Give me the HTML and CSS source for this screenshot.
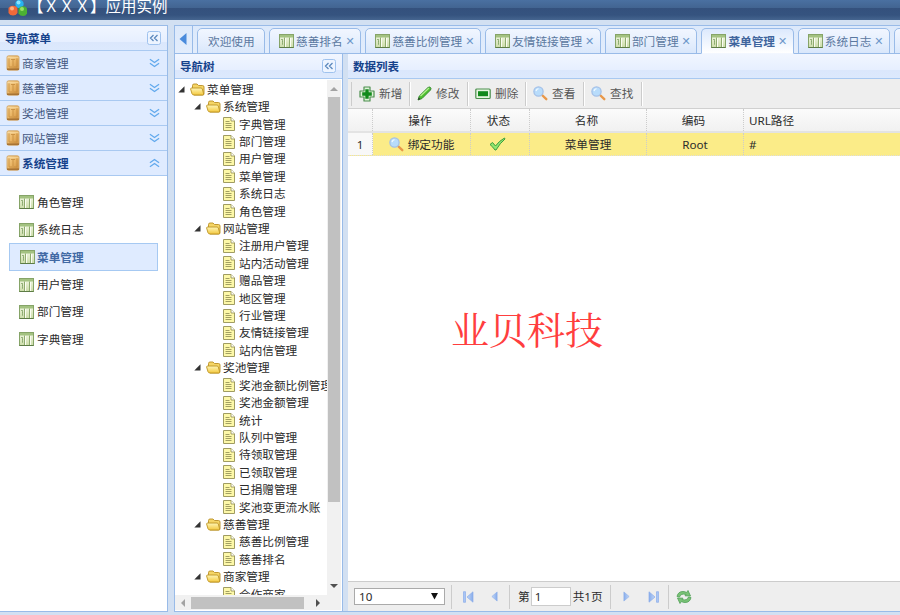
FILE: index.html
```html
<!DOCTYPE html>
<html lang="zh-CN">
<head>
    <meta charset="UTF-8">
    <title>应用实例</title>
    <link rel="stylesheet" href="styles.css">
</head>
<body>

    <!-- Shared icons -->
    <svg class="defs" width="0" height="0">
        <defs>
            <linearGradient id="gold" x1="0" x2="1" y1="0" y2="1"><stop offset="0" stop-color="#f8d596"/><stop offset=".5" stop-color="#eab564"/><stop offset="1" stop-color="#c98a3c"/></linearGradient>
            <linearGradient id="folderFill" x1="0" x2="0" y1="0" y2="1"><stop offset="0" stop-color="#fff6b8"/><stop offset="1" stop-color="#f3c83e"/></linearGradient>
            <linearGradient id="arrowFill" x1="0" x2="1"><stop offset="0" stop-color="#c4d8f8"/><stop offset="1" stop-color="#86abea"/></linearGradient>
            <linearGradient id="paneFill" x1="0" x2="0" y1="0" y2="1"><stop offset="0" stop-color="#f3f8e6"/><stop offset="1" stop-color="#cbdca8"/></linearGradient>
        </defs>
        <symbol id="box" viewBox="0 0 14 16">
            <rect x="1" y=".8" width="12" height="14.400" rx="1.500" fill="url(#gold)" stroke="#cfa468" stroke-width=".9"/>
            <path d="M1.500 2.800h11" stroke="#fae0ae" stroke-width=".8"/>
            <path d="M1 14.200h12" stroke="#a87434" stroke-width="1.600"/>
            <path d="M3 3.300v8.500M11 3.300v8.500M5 4.500h4M7 4.500v6.500M3 12h8" stroke="#c48a3c" stroke-width=".8" fill="none"/>
        </symbol>
        <symbol id="grid" viewBox="0 0 15 14">
            <rect x=".5" y=".5" width="14" height="13" fill="url(#paneFill)" stroke="#86a468"/>
            <path d="M1 1h13v2.500H1z" fill="#a3c281"/>
            <path d="M5.500 3.500V13M10.500 3.500V13" stroke="#8fab6e"/>
            <path d="M6 4h1v9H6zM11 4h1v9h-1z" fill="#fbfdf4"/>
            <path d="M2 5.500h1M3.500 5v5.500M3 7.500h1M3 10h1" stroke="#83a568" stroke-width=".8"/>
            <path d="M.5 13.500h14" stroke="#5d7c46"/>
        </symbol>
        <symbol id="folder" viewBox="0 0 15 13">
            <path d="M2.500 5V2.500Q2.500 1 4 1h3l1.500 1.500h4Q14 2.500 14 4v6.500Q14 12 12.500 12H4Z" fill="#f5d566" stroke="#b98f25" stroke-width=".9"/>
            <path d="M.6 6Q.6 5 1.600 5H11q1 0 1.300 1l1.400 5q.2 1-1 1H4Q2.500 12 2 10.800Z" fill="url(#folderFill)" stroke="#bd9425" stroke-width=".9"/>
        </symbol>
        <symbol id="page" viewBox="0 0 12 14">
            <path d="M.5.5h7.500l3.500 3.500v9.500H.5Z" fill="#fdf8a8" stroke="#a09c62"/>
            <path d="M8 .5V4h3.500" fill="#fff" stroke="#8f8b4a" stroke-width=".8"/>
            <path d="M2.500 4.500H6.500M2.500 6.500h6M2.500 8.500h6M2.500 10.500h6" stroke="#99955a" stroke-width=".9"/>
        </symbol>
        <symbol id="open" viewBox="0 0 7 7"><path d="M6.500.3V6.500H.3Z" fill="#333"/></symbol>
        <symbol id="down" viewBox="0 0 12 10"><path d="M1 .8l5 3.600L11 .8M1 5.200l5 3.600 5-3.600" fill="none" stroke="#62a9ed" stroke-width="1.400"/></symbol>
        <symbol id="left" viewBox="0 0 14 14">
            <rect x=".5" y=".5" width="13" height="13" rx="2" fill="#edf4ff" stroke="#9fc2ee"/>
            <path d="M6.500 4l-3 3 3 3M10.500 4l-3 3 3 3" fill="none" stroke="#5c88bd" stroke-width="1.300"/>
        </symbol>
        <symbol id="lens" viewBox="0 0 15 15">
            <path d="M9.500 9.500l3.800 3.700" stroke="#e8984a" stroke-width="2.400" stroke-linecap="round"/>
            <circle cx="5.500" cy="5.500" r="4.600" fill="#b8dcfb" stroke="#a3c0e8" stroke-width="1.300"/>
            <path d="M3 5q.5-2 2.500-2.300" stroke="#f2faff" stroke-width="1.300" fill="none"/>
        </symbol>
        <symbol id="prev" viewBox="0 0 8 12"><path d="M7 .8v10.400L1 6Z" fill="url(#arrowFill)" stroke="#8caeea" stroke-width=".7"/></symbol>
        <symbol id="first" viewBox="0 0 11 12"><path d="M.5.700h2v10.600h-2Z" fill="#a9c5f5" stroke="#8caeea" stroke-width=".7"/><path d="M10 .8v10.400L4 6Z" fill="url(#arrowFill)" stroke="#8caeea" stroke-width=".7"/></symbol>
    </svg>

    <!-- Title bar -->
    <header class="banner">
        <svg class="logo" width="20" height="18" viewBox="0 0 20 18">
            <circle cx="11.500" cy="4" r="4.200" fill="#27b3f0"/><circle cx="10.500" cy="2.500" r="2" fill="#8be4ff"/>
            <path d="M.5 8Q2 5.800 5 5.800T9.500 8v5Q8 15.500 5 15.500T.5 13Z" fill="#f0693a"/><circle cx="4" cy="8.500" r="2" fill="#ffae80"/>
            <path d="M10.500 8.500Q12 6.300 15 6.300t4 2.200v5Q18 16 15 16t-4.500-2.500Z" fill="#4bb133"/><circle cx="14" cy="9" r="2" fill="#99e165"/>
        </svg>
        <span>【ＸＸＸ】应用实例</span>
    </header>

    <div class="layout">
        <!-- Left menu -->
        <aside class="menu">
            <div class="menu-title"><b>导航菜单</b><svg width="14" height="14"><use href="#left"/></svg></div>
            <div class="fold"><svg width="14" height="16"><use href="#box"/></svg><span>商家管理</span><svg class="arrows" width="11" height="10"><use href="#down"/></svg></div>
            <div class="fold"><svg width="14" height="16"><use href="#box"/></svg><span>慈善管理</span><svg class="arrows" width="11" height="10"><use href="#down"/></svg></div>
            <div class="fold"><svg width="14" height="16"><use href="#box"/></svg><span>奖池管理</span><svg class="arrows" width="11" height="10"><use href="#down"/></svg></div>
            <div class="fold"><svg width="14" height="16"><use href="#box"/></svg><span>网站管理</span><svg class="arrows" width="11" height="10"><use href="#down"/></svg></div>
            <div class="fold open"><svg width="14" height="16"><use href="#box"/></svg><span>系统管理</span><svg class="arrows" width="11" height="10"><use href="#down"/></svg></div>
            <div class="links">
                <div class="link"><svg width="15" height="14"><use href="#grid"/></svg>角色管理</div>
                <div class="link"><svg width="15" height="14"><use href="#grid"/></svg>系统日志</div>
                <div class="link selected"><svg width="15" height="14"><use href="#grid"/></svg>菜单管理</div>
                <div class="link"><svg width="15" height="14"><use href="#grid"/></svg>用户管理</div>
                <div class="link"><svg width="15" height="14"><use href="#grid"/></svg>部门管理</div>
                <div class="link"><svg width="15" height="14"><use href="#grid"/></svg>字典管理</div>
            </div>
        </aside>

        <main class="center">
            <!-- Tabs -->
            <div class="tabs">
                <div class="tab-scroll"><svg width="8" height="12" viewBox="0 0 8 12"><path d="M7.500 0v12L.5 6Z" fill="#4a8bdc"/></svg></div>
                <div class="tab plain">欢迎使用</div>
                <div class="tab"><svg width="15" height="14"><use href="#grid"/></svg>慈善排名<i>✕</i></div>
                <div class="tab wide"><svg width="15" height="14"><use href="#grid"/></svg>慈善比例管理<i>✕</i></div>
                <div class="tab wide"><svg width="15" height="14"><use href="#grid"/></svg>友情链接管理<i>✕</i></div>
                <div class="tab"><svg width="15" height="14"><use href="#grid"/></svg>部门管理<i>✕</i></div>
                <div class="tab active"><svg width="15" height="14"><use href="#grid"/></svg>菜单管理<i>✕</i></div>
                <div class="tab"><svg width="15" height="14"><use href="#grid"/></svg>系统日志<i>✕</i></div>
                <div class="tab"></div>
            </div>

            <div class="panels">
                <!-- Navigation tree -->
                <section class="tree-panel">
                    <div class="panel-title"><b>导航树</b><svg width="14" height="14"><use href="#left"/></svg></div>
                    <div class="tree-view">
                        <div class="tree">
                            <div class="node root"><svg width="7" height="7"><use href="#open"/></svg><svg width="15" height="13"><use href="#folder"/></svg>菜单管理</div>
                            <div class="node"><svg width="7" height="7"><use href="#open"/></svg><svg width="15" height="13"><use href="#folder"/></svg>系统管理</div>
                            <div class="leaf"><svg width="12" height="14"><use href="#page"/></svg>字典管理</div>
                            <div class="leaf"><svg width="12" height="14"><use href="#page"/></svg>部门管理</div>
                            <div class="leaf"><svg width="12" height="14"><use href="#page"/></svg>用户管理</div>
                            <div class="leaf"><svg width="12" height="14"><use href="#page"/></svg>菜单管理</div>
                            <div class="leaf"><svg width="12" height="14"><use href="#page"/></svg>系统日志</div>
                            <div class="leaf"><svg width="12" height="14"><use href="#page"/></svg>角色管理</div>
                            <div class="node"><svg width="7" height="7"><use href="#open"/></svg><svg width="15" height="13"><use href="#folder"/></svg>网站管理</div>
                            <div class="leaf"><svg width="12" height="14"><use href="#page"/></svg>注册用户管理</div>
                            <div class="leaf"><svg width="12" height="14"><use href="#page"/></svg>站内活动管理</div>
                            <div class="leaf"><svg width="12" height="14"><use href="#page"/></svg>赠品管理</div>
                            <div class="leaf"><svg width="12" height="14"><use href="#page"/></svg>地区管理</div>
                            <div class="leaf"><svg width="12" height="14"><use href="#page"/></svg>行业管理</div>
                            <div class="leaf"><svg width="12" height="14"><use href="#page"/></svg>友情链接管理</div>
                            <div class="leaf"><svg width="12" height="14"><use href="#page"/></svg>站内信管理</div>
                            <div class="node"><svg width="7" height="7"><use href="#open"/></svg><svg width="15" height="13"><use href="#folder"/></svg>奖池管理</div>
                            <div class="leaf"><svg width="12" height="14"><use href="#page"/></svg>奖池金额比例管理</div>
                            <div class="leaf"><svg width="12" height="14"><use href="#page"/></svg>奖池金额管理</div>
                            <div class="leaf"><svg width="12" height="14"><use href="#page"/></svg>统计</div>
                            <div class="leaf"><svg width="12" height="14"><use href="#page"/></svg>队列中管理</div>
                            <div class="leaf"><svg width="12" height="14"><use href="#page"/></svg>待领取管理</div>
                            <div class="leaf"><svg width="12" height="14"><use href="#page"/></svg>已领取管理</div>
                            <div class="leaf"><svg width="12" height="14"><use href="#page"/></svg>已捐赠管理</div>
                            <div class="leaf"><svg width="12" height="14"><use href="#page"/></svg>奖池变更流水账</div>
                            <div class="node"><svg width="7" height="7"><use href="#open"/></svg><svg width="15" height="13"><use href="#folder"/></svg>慈善管理</div>
                            <div class="leaf"><svg width="12" height="14"><use href="#page"/></svg>慈善比例管理</div>
                            <div class="leaf"><svg width="12" height="14"><use href="#page"/></svg>慈善排名</div>
                            <div class="node"><svg width="7" height="7"><use href="#open"/></svg><svg width="15" height="13"><use href="#folder"/></svg>商家管理</div>
                            <div class="leaf"><svg width="12" height="14"><use href="#page"/></svg>合作商家</div>
                        </div>
                        <div class="vbar">
                            <svg width="8" height="5" viewBox="0 0 8 5"><path d="M0 5l4-4 4 4Z" fill="#a3a3a3"/></svg>
                            <div class="vthumb"></div>
                            <svg class="last" width="8" height="5" viewBox="0 0 8 5"><path d="M0 0l4 4 4-4Z" fill="#505050"/></svg>
                        </div>
                        <div class="hbar">
                            <svg width="5" height="8" viewBox="0 0 5 8"><path d="M5 0L1 4l4 4Z" fill="#a3a3a3"/></svg>
                            <div class="hthumb"></div>
                            <svg class="last" width="5" height="8" viewBox="0 0 5 8"><path d="M0 0l4 4-4 4Z" fill="#505050"/></svg>
                        </div>
                        <div class="corner"></div>
                    </div>
                </section>

                <!-- Data list -->
                <section class="data-panel">
                    <div class="panel-title"><b>数据列表</b></div>
                    <div class="toolbar">
                        <div class="tool"><svg width="16" height="16" viewBox="0 0 16 16"><path d="M5 1h6v4h4v6h-4v4H5v-4H1V5h4Z" fill="#dff3d8" stroke="#4d8f4f" stroke-width="1.200" stroke-linejoin="round"/><path d="M6.300 3.200h3.400v3.100h3.100v3.400H9.700v3.100H6.300V9.700H3.200V6.300h3.100Z" fill="#128a1c"/></svg>新增</div>
                        <div class="tool"><svg width="15" height="15" viewBox="0 0 15 15"><path d="M1 14l1.300-4L11 1.500q1.500-1 2.500 0t0 2.500L5 12.500Z" fill="#4bbf2e" stroke="#3a8c34"/><path d="M3.500 10L12 2" stroke="#b6ee91" stroke-width="1.200"/><path d="M1 14l.8-2.500 1.600 1.600Z" fill="#333"/></svg>修改</div>
                        <div class="tool"><svg width="16" height="12" viewBox="0 0 16 12"><rect x=".8" y="1" width="14.400" height="9.500" rx="1" fill="#e6f6e0" stroke="#4d8f4f" stroke-width="1.200"/><path d="M3 3.200h10v5H3Z" fill="#128a1c"/></svg>删除</div>
                        <div class="tool"><svg width="15" height="15"><use href="#lens"/></svg>查看</div>
                        <div class="tool"><svg width="15" height="15"><use href="#lens"/></svg>查找</div>
                    </div>
                    <div class="row head">
                        <div></div><div>操作</div><div>状态</div><div>名称</div><div>编码</div><div class="url">URL路径</div>
                    </div>
                    <div class="row record">
                        <div class="num">1</div>
                        <div class="bind"><svg width="15" height="15"><use href="#lens"/></svg>绑定功能</div>
                        <div class="state"><svg width="17" height="14" viewBox="0 0 17 14"><path d="M1 7.500L3.500 5.500 6.500 9Q10 4 15.500 1L16 2Q11 6 7 13H6Q4 10 1 7.500Z" fill="#8fe670" stroke="#3c9c3c"/></svg></div>
                        <div>菜单管理</div><div>Root</div><div class="url">#</div>
                    </div>
                    <div class="sheet"><span class="watermark">业贝科技</span></div>
                    <div class="pager">
                        <div class="size"><span>10</span><svg width="7" height="7" viewBox="0 0 7 7"><path d="M0 0h7L3.500 6.500Z" fill="#111"/></svg></div>
                        <div class="page-btns back"><svg width="11" height="12"><use href="#first"/></svg><svg width="7" height="11"><use href="#prev"/></svg></div>
                        <div class="page-no">第<span class="page-input">1</span>共1页</div>
                        <div class="page-btns forward"><svg width="7" height="11"><use href="#prev"/></svg><svg width="11" height="12"><use href="#first"/></svg></div>
                        <svg class="reload" width="16" height="16" viewBox="0 0 16 16"><path d="M1 7.500Q2 2.500 7 2.500q2 0 3.500 1L12 1.500 14.500 7 9 6.800l1-1.300Q5 4 3.500 8Z" fill="#79c276" stroke="#4fa056" stroke-width=".8"/><path d="M15 8.500q-1 5-6 5-2 0-3.500-1L4 14.500 1.500 9 7 9.200 6 10.500q5 1.500 6.500-2.500Z" fill="#79c276" stroke="#4fa056" stroke-width=".8"/></svg>
                    </div>
                </section>
            </div>
        </main>
    </div>
</body>
</html>
```

FILE: styles.css
```css
* {
    box-sizing: border-box;
}
body {
    margin: 0;
    width: 900px;
    height: 615px;
    overflow: hidden;
    display: flex;
    flex-direction: column;
    background: #d2e0f2;
    color: #2b2b2b;
    font-family: "Noto Sans", "Noto Sans CJK SC", sans-serif;
    font-size: 11.65px;
    line-height: 17px;
    white-space: nowrap;
}
svg {
    display: block;
    flex: none;
}
.defs {
    position: absolute;
}
.banner {
    height: 20px;
    flex: none;
    display: flex;
    padding-left: 8px;
    background: linear-gradient(#4a70a1, #426491 8px, #34517d 8px, #35537f 15px, #45658f);
    color: #fff;
    font-size: 15.5px;
    line-height: 11px;
}
.banner span {
    font-family: "Noto Sans CJK SC", sans-serif;
}
.layout {
    flex: 1;
    display: flex;
    gap: 6px;
    padding: 5px 0 3px;
    min-height: 0;
}

/* left menu */
.menu {
    width: 168px;
    border: 1px solid #99bbe8;
    border-left: 0;
    background: #fff;
}
.menu-title, .panel-title {
    height: 25px;
    flex: none;
    display: flex;
    align-items: center;
    justify-content: space-between;
    padding: 0 6px 0 5px;
    border-bottom: 1px solid #a9c9f1;
    background: linear-gradient(#f1f6ff, #e6efff 16px, #dbe7fc 16px, #dce9fd);
    color: #15428b;
}
.menu-title b, .panel-title b {
    font-size: 11.5px;
}
.fold {
    height: 25.1px;
    display: flex;
    align-items: center;
    padding: 0 7px 0 6px;
    border-bottom: 1px solid #a9c9f1;
    background: #dfebff;
    color: #43587f;
}
.fold span {
    margin-left: 2px;
}
.arrows {
    margin-left: auto;
}
.open {
    color: #15428b;
    font-weight: bold;
}
.open .arrows {
    transform: scaleY(-1);
}
.links {
    padding: 12px 9px 0;
}
.link {
    height: 27.45px;
    display: flex;
    align-items: center;
    gap: 3px;
    padding-left: 10px;
}
.selected {
    gap: 2px;
    border: 1px solid #a6c9f2;
    background: #dfebff;
    color: #4169a4;
    font-weight: bold;
}

/* tabs */
.center {
    flex: 1;
    min-width: 0;
    display: flex;
    flex-direction: column;
    border: 1px solid #99bbe8;
    border-right: 0;
}
.tabs {
    height: 28px;
    flex: none;
    display: flex;
    align-items: flex-end;
    gap: 4px;
    overflow: hidden;
    background: linear-gradient(#dce9fb, #e3edfc);
    box-shadow: inset 0 -1px #99bbe8;
}
.tab-scroll {
    width: 18px;
    height: 28px;
    padding: 7px 0 0 4px;
    flex: none;
    border: solid #99bbe8;
    border-width: 0 1px 1px 0;
}
.tab {
    width: 92.4px;
    height: 26px;
    flex: none;
    display: flex;
    align-items: center;
    padding: 0 0 0 9px;
    border: 1px solid #99bbe8;
    border-radius: 5px 5px 0 0;
    background: linear-gradient(#f1f6ff, #e4eefd 60%, #d9e7fb);
    color: #5a78a0;
}
.tab svg {
    margin-right: 2px;
}
.tab i {
    margin-left: 3px;
    color: #6e98ca;
    font: 11px "DejaVu Sans", sans-serif;
}
.plain {
    width: 68px;
    padding-left: 10px;
}
.wide {
    width: 115.8px;
}
.active {
    border-bottom-color: #f3f7ff;
    background: linear-gradient(#dce9fd, #fff);
    color: #3f659d;
    font-weight: bold;
}

/* tree */
.panels {
    flex: 1;
    min-height: 0;
    display: flex;
    gap: 5px;
}
.tree-panel {
    width: 168px;
    display: flex;
    flex-direction: column;
    border-right: 1px solid #99bbe8;
    background: #fff;
}
.tree-view {
    flex: 1;
    min-height: 0;
    display: grid;
    grid-template-columns: 152px 14px;
    grid-template-rows: minmax(0, 1fr) 15px;
    padding: 1px 0;
}
.tree {
    overflow: hidden;
    padding-top: .6px;
}
.node, .leaf {
    height: 17.42px;
    display: flex;
    align-items: center;
    gap: 2px;
    padding-left: 48px;
}
.leaf {
    gap: 4px;
}
.node {
    padding-left: 19px;
}
.node svg:first-child {
    margin-right: 3px;
}
.root {
    padding-left: 3px;
}
.vbar, .hbar {
    display: flex;
    align-items: center;
    background: #f1f1f1;
}
.vbar {
    flex-direction: column;
    padding: 6px 0;
}
.vthumb {
    width: 12px;
    height: 405px;
    margin-top: 6px;
    background: #c1c1c1;
}
.vbar .last {
    margin-top: auto;
}
.hbar {
    padding: 0 6px 0 5px;
}
.hthumb {
    width: 113px;
    height: 12px;
    margin-left: 6px;
    background: #c1c1c1;
}
.hbar .last {
    margin-left: auto;
}
.corner {
    background: #f1f1f1;
}

/* data list */
.data-panel {
    flex: 1;
    min-width: 0;
    display: flex;
    flex-direction: column;
    background: #fff;
}
.toolbar {
    height: 30px;
    flex: none;
    display: flex;
    align-items: center;
    padding-left: 3px;
    border-bottom: 1px solid #d0d0d0;
    background: #eee;
    color: #555;
}
.tool {
    width: 58px;
    height: 24px;
    display: flex;
    align-items: center;
    gap: 4px;
    padding-left: 7px;
    border-right: 1px solid #ccc;
    box-shadow: 1px 0 #fff;
}
.tool:first-child {
    width: 59px;
    border-left: 1px solid #ccc;
}
.row {
    display: grid;
    grid-template-columns: 25px 98px 59px 117px 97px 1fr;
    flex: none;
}
.row div {
    display: flex;
    align-items: center;
    justify-content: center;
    border-right: 1px dotted #ccc;
}
.row .url {
    justify-content: flex-start;
    padding-left: 5px;
    border-right: 0;
}
.head {
    height: 24px;
    border-bottom: 2px solid #e3e3e3;
    background: linear-gradient(#fbfbfb, #f1f1f1);
}
.head div {
    padding: 1px 3px 0 0;
}
.record {
    height: 23px;
    background: #fbec88;
    border-bottom: 1px dotted #ddd;
}
.record .num {
    background: #f8f8f8;
}
.bind {
    gap: 4px;
}
.record .state {
    padding-right: 5px;
}
.sheet {
    flex: 1;
    padding: 149px 0 0 103px;
}
.watermark {
    color: #ff3e3e;
    font-family: FangSong, "Noto Serif CJK SC", "Noto Sans CJK SC", serif;
    font-size: 38px;
    line-height: 46px;
}

/* pager */
.pager {
    height: 30px;
    flex: none;
    display: flex;
    align-items: center;
    padding-left: 6px;
    border-top: 1px solid #ccc;
    background: #eee;
}
.size {
    width: 91px;
    height: 17px;
    display: flex;
    align-items: center;
    justify-content: space-between;
    padding: 0 6px 0 4px;
    border: 1px solid #aaa;
    background: #fff;
}
.page-btns {
    width: 59px;
    height: 24px;
    display: flex;
    align-items: center;
    border: solid #ccc;
    border-width: 0 1px;
}
.back {
    margin-left: 6px;
    padding-left: 11px;
    gap: 17px;
}
.forward {
    margin-left: 7px;
    padding-left: 12px;
    gap: 18px;
}
.forward svg {
    transform: scaleX(-1);
}
.page-no {
    display: flex;
    align-items: center;
    margin-left: 8px;
}
.page-input {
    width: 40px;
    height: 19px;
    margin: 0 2px 0 1px;
    padding-left: 3px;
    border: 1px solid #ccc;
    background: #fff;
}
.reload {
    margin-left: 7px;
}
```
